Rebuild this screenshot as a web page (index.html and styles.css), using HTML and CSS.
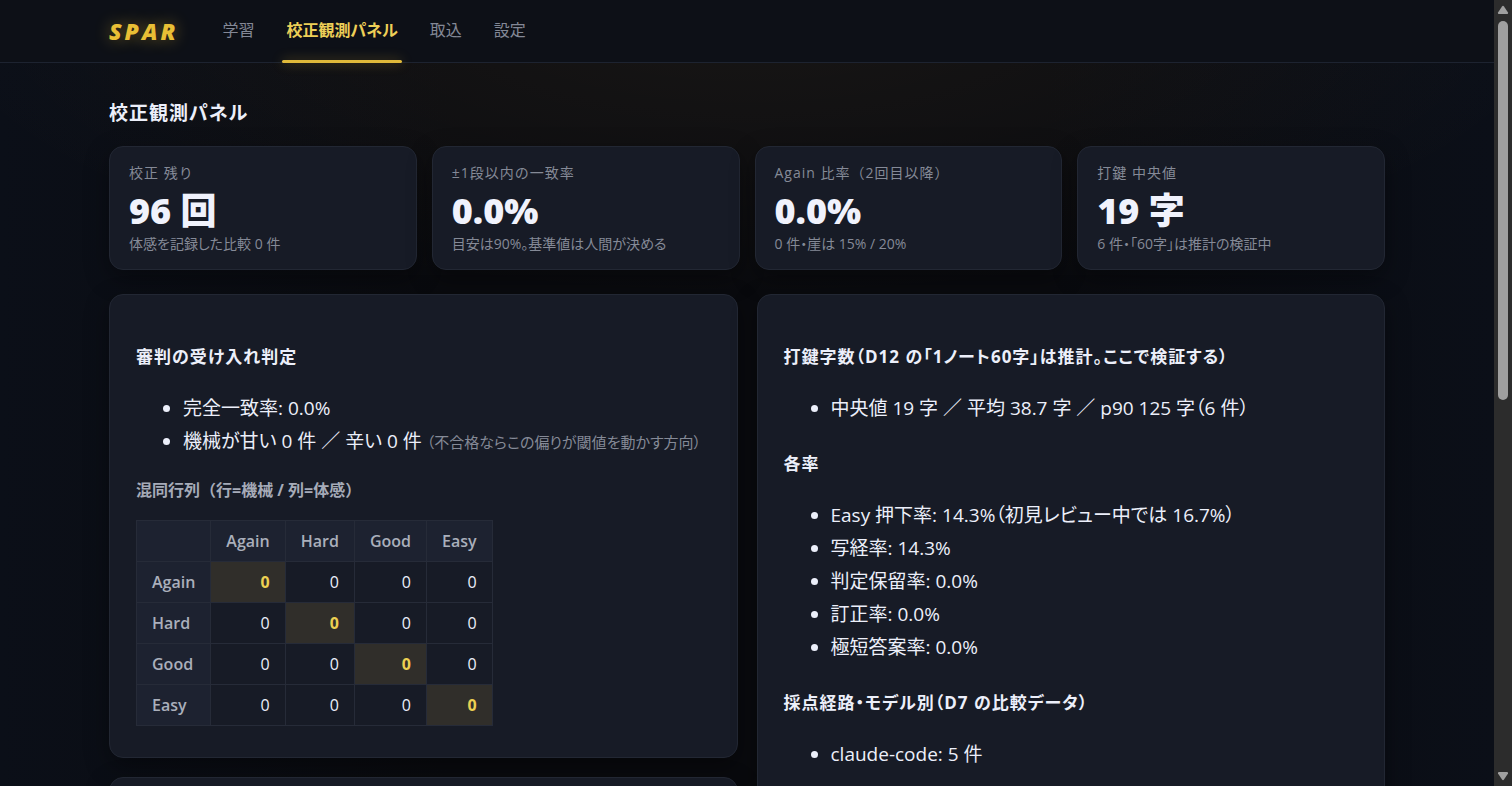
FILE: index.html
```html
<!DOCTYPE html>
<html lang="ja">
<head>
    <meta charset="UTF-8">
    <meta name="viewport" content="width=device-width, initial-scale=1.0">
    <title>SPAR - 校正観測パネル</title>
    <link rel="stylesheet" href="styles.css">
</head>
<body>
    <div class="window">
        <div class="page">
            <header class="topbar">
                <div class="topbar-inner">
                    <a class="brand" href="/">SPAR</a>
                    <nav>
                        <a href="/study">学習</a>
                        <a href="/panel" class="active">校正観測パネル</a>
                        <a href="/import">取込</a>
                        <a href="/settings">設定</a>
                    </nav>
                </div>
            </header>

            <main>
                <h1>校正観測パネル</h1>

                <section class="stats">
                    <div class="stat">
                        <div class="stat-label">校正 残り</div>
                        <div class="stat-value">96 回</div>
                        <div class="stat-note">体感を記録した比較 0 件</div>
                    </div>
                    <div class="stat">
                        <div class="stat-label">±1段以内の一致率</div>
                        <div class="stat-value">0.0%</div>
                        <div class="stat-note">目安は90%。基準値は人間が決める</div>
                    </div>
                    <div class="stat">
                        <div class="stat-label">Again 比率（2回目以降）</div>
                        <div class="stat-value">0.0%</div>
                        <div class="stat-note">0 件・崖は 15% / 20%</div>
                    </div>
                    <div class="stat">
                        <div class="stat-label">打鍵 中央値</div>
                        <div class="stat-value">19 字</div>
                        <div class="stat-note">6 件・「60字」は推計の検証中</div>
                    </div>
                </section>

                <div class="columns">
                    <div class="column">
                        <section class="panel">
                            <h2>審判の受け入れ判定</h2>
                            <ul>
                                <li>完全一致率: 0.0%</li>
                                <li>機械が甘い 0 件 ／ 辛い 0 件 <span class="muted">（不合格ならこの偏りが閾値を動かす方向）</span></li>
                            </ul>
                            <h3>混同行列（行=機械 / 列=体感）</h3>
                            <table class="matrix">
                                <thead>
                                    <tr><th></th><th>Again</th><th>Hard</th><th>Good</th><th>Easy</th></tr>
                                </thead>
                                <tbody>
                                    <tr><th>Again</th><td class="hit">0</td><td>0</td><td>0</td><td>0</td></tr>
                                    <tr><th>Hard</th><td>0</td><td class="hit">0</td><td>0</td><td>0</td></tr>
                                    <tr><th>Good</th><td>0</td><td>0</td><td class="hit">0</td><td>0</td></tr>
                                    <tr><th>Easy</th><td>0</td><td>0</td><td>0</td><td class="hit">0</td></tr>
                                </tbody>
                            </table>
                        </section>
                        <section class="panel panel-next"></section>
                    </div>

                    <section class="panel">
                        <h2>打鍵字数（D12 の「1ノート60字」は推計。ここで検証する）</h2>
                        <ul>
                            <li>中央値 19 字 ／ 平均 38.7 字 ／ p90 125 字（6 件）</li>
                        </ul>
                        <h2>各率</h2>
                        <ul>
                            <li>Easy 押下率: 14.3%（初見レビュー中では 16.7%）</li>
                            <li>写経率: 14.3%</li>
                            <li>判定保留率: 0.0%</li>
                            <li>訂正率: 0.0%</li>
                            <li>極短答案率: 0.0%</li>
                        </ul>
                        <h2>採点経路・モデル別（D7 の比較データ）</h2>
                        <ul>
                            <li>claude-code: 5 件</li>
                        </ul>
                    </section>
                </div>
            </main>
        </div>

        <div class="scrollbar" aria-hidden="true">
            <svg viewBox="0 0 12 10"><path d="M5 1.5Q6 .2 7 1.5L11 7.5Q11.500 9 10 9H2Q.5 9 1 7.500Z"/></svg>
            <div class="track"><div class="thumb"></div></div>
            <svg viewBox="0 0 12 10"><path d="M5 8.500Q6 9.800 7 8.500L11 2.500Q11.500 1 10 1H2Q.5 1 1 2.500Z"/></svg>
        </div>
    </div>
</body>
</html>
```

FILE: styles.css
```css
* {
    box-sizing: border-box;
}
body {
    margin: 0;
    background-color: #0a0c11;
    color: #eceffa;
    font-family: "Open Sans", "Noto Sans CJK JP", sans-serif;
    font-feature-settings: "palt";
    font-size: 19px;
    line-height: 33px;
}
a {
    color: inherit;
    text-decoration: none;
}
.window {
    display: flex;
    height: 100vh;
}
.page {
    flex: 1;
    min-width: 0;
    overflow-y: auto;
    scrollbar-width: none;
    background:
        radial-gradient(ellipse 56% 300px at 50% 0, rgba(255, 200, 120, 0.06), transparent),
        linear-gradient(90deg, #0b0f18, #0a0b0f 30%, #0a0b0f 70%, #0b0f18);
}

/* Header */
.topbar {
    height: 63px;
    background-color: #0d1017;
    border-bottom: 1px solid #1d2330;
}
.topbar-inner {
    display: flex;
    align-items: center;
    gap: 40px;
    height: 100%;
}
.topbar-inner,
main {
    max-width: 1320px;
    margin: 0 auto;
    padding: 0 22px;
}
.brand {
    color: #e9bf35;
    font-size: 23px;
    font-weight: 800;
    font-style: italic;
    letter-spacing: 3px;
    text-shadow: 0 0 16px rgba(240, 190, 50, 0.45);
}
nav {
    display: flex;
    gap: 24px;
    height: 100%;
}
nav a {
    position: relative;
    padding: 14px 4px;
    color: #838896;
    font-size: 16px;
}
nav a.active {
    color: #edcf57;
    font-weight: 700;
}
nav a.active::after {
    content: "";
    position: absolute;
    left: 0;
    right: 0;
    bottom: -1px;
    height: 3px;
    border-radius: 2px;
    background-color: #e0b93a;
    box-shadow: 0 0 12px rgba(240, 190, 50, 0.4);
}

h1 {
    margin: 34px 0 16px;
    font-size: 19px;
    letter-spacing: 1px;
}

/* Stat cards */
.stats {
    display: grid;
    grid-template-columns: repeat(4, 1fr);
    gap: 15px;
    margin-bottom: 24px;
}
.stat,
.panel {
    background-color: #171b26;
    border: 1px solid #222733;
    border-radius: 14px;
    box-shadow: 0 8px 24px rgba(0, 0, 0, 0.35);
}
.stat {
    height: 124px;
    padding: 13px 19px;
    color: #858a97;
    font-size: 14px;
}
.stat-label {
    line-height: 26px;
    letter-spacing: 1px;
    font-feature-settings: normal;
}
.stat-value {
    color: #f0f2fc;
    font-size: 36px;
    font-weight: 800;
    line-height: 49px;
}
.stat-note {
    line-height: 18px;
}

/* Panels */
.columns {
    display: grid;
    grid-template-columns: repeat(2, minmax(0, 1fr));
    gap: 19px;
}
.column {
    display: flex;
    flex-direction: column;
    gap: 19px;
}
.panel {
    padding: 23px 26px 31px;
}
.panel-next {
    min-height: 240px;
}
h2 {
    margin: 24px 0 20px;
    font-size: 17px;
    line-height: 30px;
    letter-spacing: 1px;
}
ul {
    margin: 20px 0 17px;
    padding-left: 47px;
}
.muted {
    color: #858a97;
    font-size: 15px;
}
h3 {
    margin: 17px 0 16px;
    color: #a6abb8;
    font-size: 16px;
    line-height: 28px;
    font-feature-settings: normal;
}
.matrix {
    border-collapse: collapse;
    font-size: 16px;
    line-height: 28px;
}
.matrix th,
.matrix td {
    padding: 6px 15px;
    border: 1px solid #262b38;
    text-align: right;
}
.matrix th {
    background-color: #1d2230;
    color: #aaafbb;
    font-weight: 600;
}
.matrix tbody th {
    text-align: left;
}
.matrix td.hit {
    background-color: #302e2a;
    color: #ecd052;
    font-weight: 700;
}

/* Scrollbar */
.scrollbar {
    display: flex;
    flex-direction: column;
    align-items: center;
    gap: 6px;
    width: 18px;
    padding: 5px 0;
    background-color: #2c2c2c;
}
.scrollbar svg {
    width: 12px;
    height: 10px;
    fill: #a0a0a0;
}
.track {
    flex: 1;
}
.thumb {
    width: 10px;
    height: 51%;
    border-radius: 5px;
    background-color: #9f9f9f;
}
```
